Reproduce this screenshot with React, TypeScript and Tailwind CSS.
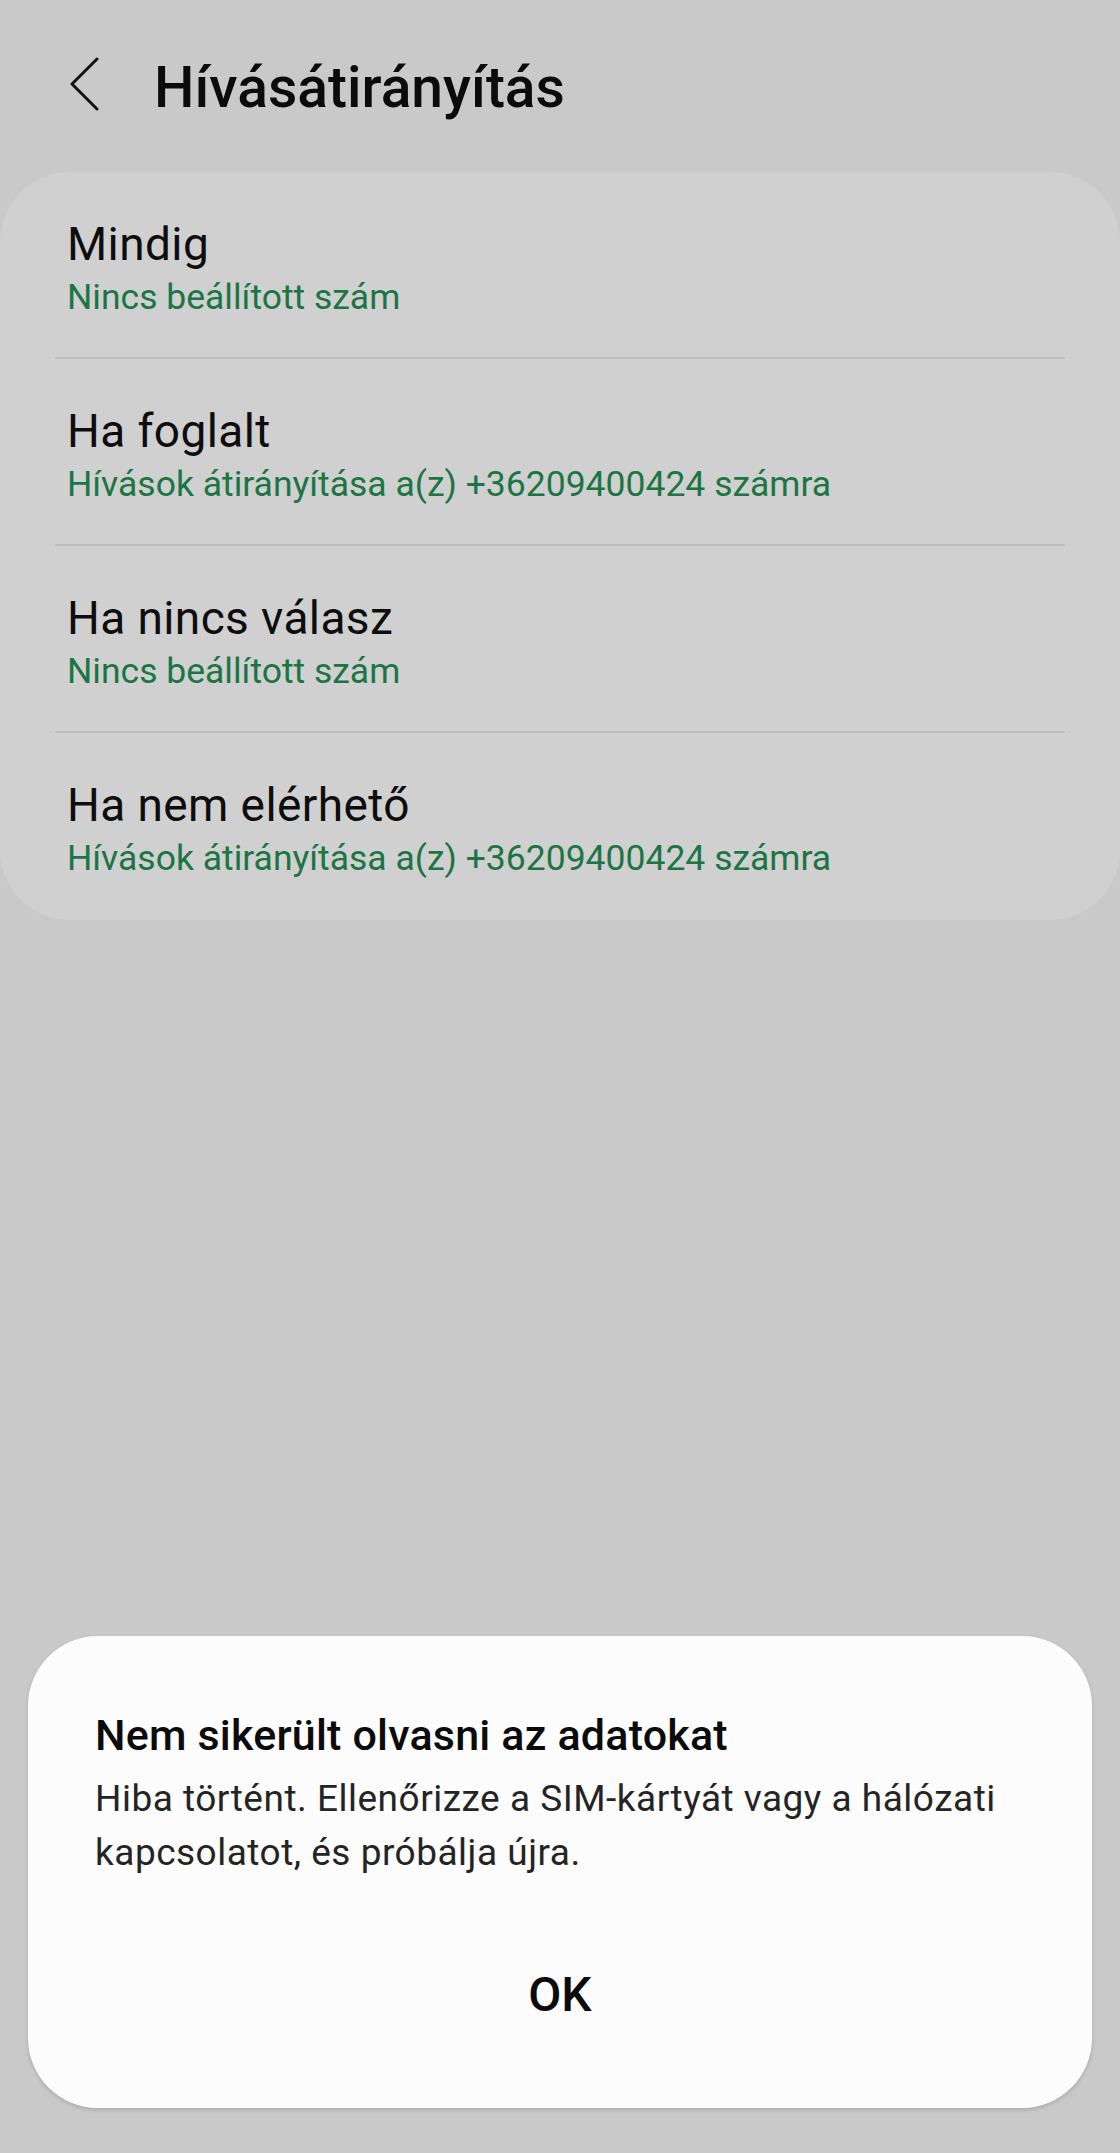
import React from "react";

const rows = [
  { title: "Mindig", sub: "Nincs beállított szám" },
  { title: "Ha foglalt", sub: "Hívások átirányítása a(z) +36209400424 számra" },
  { title: "Ha nincs válasz", sub: "Nincs beállított szám" },
  { title: "Ha nem elérhető", sub: "Hívások átirányítása a(z) +36209400424 számra" },
];

export default function App() {
  return (
    <div className="min-h-[2153px] w-[1120px] bg-[#c9c9c9] flex flex-col font-['Roboto',sans-serif] overflow-hidden">
      <header className="h-[172px] flex items-start pt-[55px]">
        <svg className="ml-[70px] mt-[2px]" width="30" height="54" viewBox="0 0 30 54" fill="none">
          <polyline points="27,2 2,27 27,52" stroke="#111" strokeWidth="3" strokeLinecap="round" strokeLinejoin="round" />
        </svg>
        <h1 className="ml-[54px] text-[57px] leading-[66px] font-medium text-[#0b0b0b]">
          Hívásátirányítás
        </h1>
      </header>

      <section className="bg-[#d0d0d0] rounded-[70px] pb-[2px]">
        {rows.map((row, i) => (
          <div key={row.title}>
            <div className="px-[67px] pt-[45px] pb-[33px]">
              <p className="text-[46px] leading-[54px] tracking-[0.4px] text-[#0d0d0d]">{row.title}</p>
              <p className="text-[35.5px] leading-[53px] text-[#1b7544]">{row.sub}</p>
            </div>
            {i < rows.length - 1 && <div className="mx-[55px] h-[2px] bg-[#bdbdbd]" />}
          </div>
        ))}
      </section>

      <div className="flex-1" />

      <div className="mx-[28px] mb-[45px] bg-[#fcfcfc] rounded-[70px] shadow-[0_2px_4px_rgba(0,0,0,0.15)] px-[67px] pt-[73px] pb-[84px]">
        <h2 className="text-[43px] leading-[52px] tracking-[0.2px] font-medium text-[#0b0b0b]">
          Nem sikerült olvasni az adatokat
        </h2>
        <p className="mt-[11px] text-[37px] leading-[54px] tracking-[0.5px] text-[#242424]">
          Hiba történt. Ellenőrizze a SIM-kártyát vagy a hálózati kapcsolatot, és próbálja újra.
        </p>
        <button className="mt-[86px] w-full text-center text-[48px] leading-[58px] font-medium text-[#0b0b0b]">
          OK
        </button>
      </div>
    </div>
  );
}
